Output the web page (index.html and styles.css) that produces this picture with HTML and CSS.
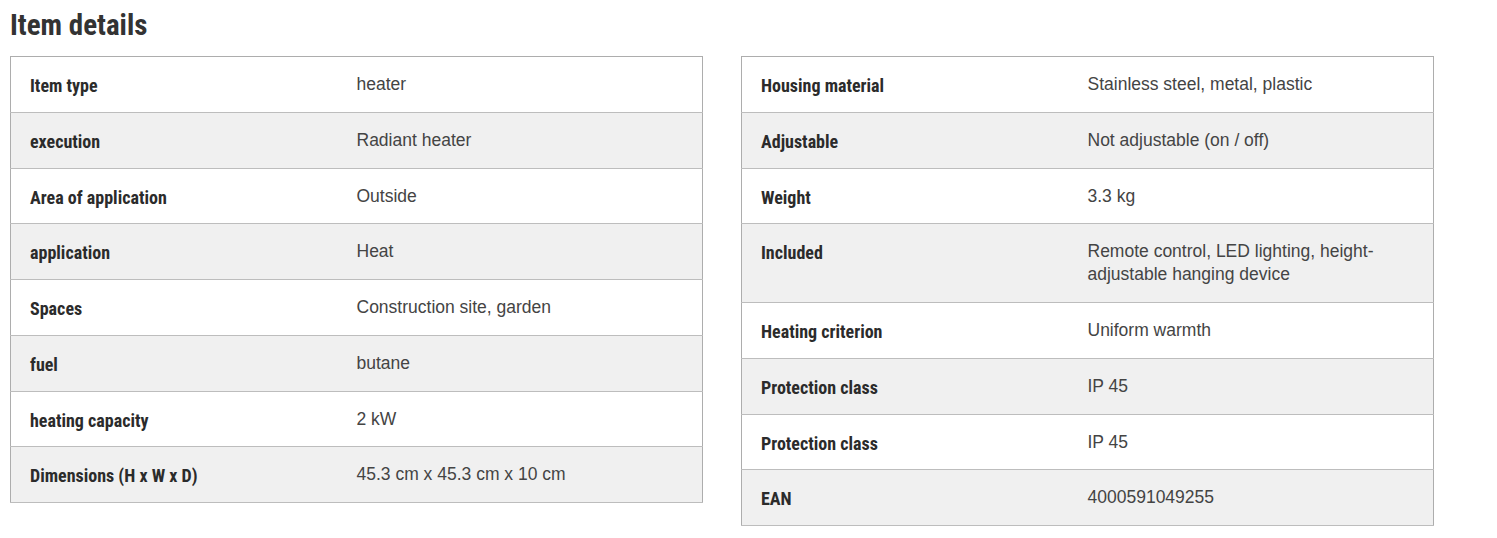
FILE: index.html
```html
<!DOCTYPE html>
<html>
<head>
<meta charset="utf-8">
<link rel="stylesheet" href="styles.css">
</head>
<body>
<h2 class="title">Item details</h2>
<div class="tables">
  <table class="spec">
    <colgroup><col class="c-label"><col></colgroup>
    <tr><td class="label">Item type</td><td class="value">heater</td></tr>
    <tr><td class="label">execution</td><td class="value">Radiant heater</td></tr>
    <tr><td class="label">Area of application</td><td class="value">Outside</td></tr>
    <tr><td class="label">application</td><td class="value">Heat</td></tr>
    <tr><td class="label">Spaces</td><td class="value">Construction site, garden</td></tr>
    <tr><td class="label">fuel</td><td class="value">butane</td></tr>
    <tr><td class="label">heating capacity</td><td class="value">2 kW</td></tr>
    <tr><td class="label">Dimensions (H x W x D)</td><td class="value">45.3 cm x 45.3 cm x 10 cm</td></tr>
  </table>
  <table class="spec">
    <colgroup><col class="c-label"><col></colgroup>
    <tr><td class="label">Housing material</td><td class="value">Stainless steel, metal, plastic</td></tr>
    <tr><td class="label">Adjustable</td><td class="value">Not adjustable (on / off)</td></tr>
    <tr><td class="label">Weight</td><td class="value">3.3 kg</td></tr>
    <tr><td class="label">Included</td><td class="value">Remote control, LED lighting, height-adjustable hanging device</td></tr>
    <tr><td class="label">Heating criterion</td><td class="value">Uniform warmth</td></tr>
    <tr><td class="label">Protection class</td><td class="value">IP 45</td></tr>
    <tr><td class="label">Protection class</td><td class="value">IP 45</td></tr>
    <tr><td class="label">EAN</td><td class="value">4000591049255</td></tr>
  </table>
</div>
</body>
</html>
```
FILE: styles.css
```css
html, body {
  margin: 0;
  padding: 0;
  background: #fff;
}
body {
  padding: 0 10px;
  font-family: "Liberation Sans", Arial, sans-serif;
}
.title {
  margin: 0;
  padding-top: 7px;
  height: 56px;
  box-sizing: border-box;
  font-family: "Roboto Condensed", "Open Sans", sans-serif;
  font-stretch: 75%;
  font-weight: bold;
  font-size: 29px;
  line-height: 36px;
  color: #333;
}
.tables {
  display: flex;
  gap: 38px;
  align-items: flex-start;
}
.spec {
  width: 693px;
  table-layout: fixed;
  border-collapse: collapse;
  border: 1px solid #adadad;
}
.c-label {
  width: 327px;
}
.spec tr {
  border-bottom: 1px solid #bdbdbd;
}
.spec tr:nth-child(even) {
  background: #f0f0f0;
}
.spec td {
  vertical-align: top;
  padding: 16px 19px 15.75px;
  line-height: 23px;
}
.label {
  font-family: "Roboto Condensed", "Open Sans", sans-serif;
  font-stretch: 75%;
  font-weight: bold;
  font-size: 18px;
  color: #2b2b2b;
  padding-top: 17px !important;
  padding-bottom: 14.75px !important;
}
.value {
  font-size: 17.5px;
  color: #444;
}
```
